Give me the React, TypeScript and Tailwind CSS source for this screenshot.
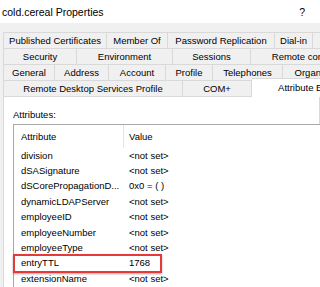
import React from 'react';

type Tab = { label: string; w: number };

const rows: Tab[][] = [
  [
    { label: 'Published Certificates', w: 104 },
    { label: 'Member Of', w: 61 },
    { label: 'Password Replication', w: 107 },
    { label: 'Dial-in', w: 38 },
    { label: 'Object', w: 60 },
  ],
  [
    { label: 'Security', w: 74 },
    { label: 'Environment', w: 96 },
    { label: 'Sessions', w: 78 },
    { label: 'Remote control', w: 107 },
  ],
  [
    { label: 'General', w: 52 },
    { label: 'Address', w: 54 },
    { label: 'Account', w: 57 },
    { label: 'Profile', w: 47 },
    { label: 'Telephones', w: 70 },
    { label: 'Organization', w: 78 },
  ],
];

const attributes: [string, string][] = [
  ['division', '<not set>'],
  ['dSASignature', '<not set>'],
  ['dSCorePropagationD...', '0x0 = ( )'],
  ['dynamicLDAPServer', '<not set>'],
  ['employeeID', '<not set>'],
  ['employeeNumber', '<not set>'],
  ['employeeType', '<not set>'],
  ['entryTTL', '1768'],
  ['extensionName', '<not set>'],
];

function TabCell({ tab, first }: { tab: Tab; first: boolean }) {
  return (
    <div
      style={{ width: tab.w }}
      className={`h-4 shrink-0 flex items-center justify-center whitespace-nowrap border-t border-r border-[#d9d9d9] ${
        first ? 'border-l' : ''
      }`}
    >
      {tab.label}
    </div>
  );
}

export default function App() {
  return (
    <div className="w-[320px] h-[287px] overflow-hidden bg-[#f0f0f0] text-black flex flex-col font-['Liberation_Sans',Arial,sans-serif] text-[9.5px] leading-[12px]">
      <div className="h-[23px] shrink-0 bg-white flex items-center justify-between pl-[2px] pr-[15px] text-[10.5px]">
        <span>cold.cereal Properties</span>
        <span>?</span>
      </div>

      <div className="mt-[9px] ml-[3px] flex flex-col">
        {rows.map((row, i) => (
          <div key={i} className="flex">
            {row.map((tab, j) => (
              <TabCell key={tab.label} tab={tab} first={j === 0} />
            ))}
          </div>
        ))}
        <div className="flex items-end h-4">
          <TabCell tab={{ label: 'Remote Desktop Services Profile', w: 180 }} first />
          <TabCell tab={{ label: 'COM+', w: 69 }} first={false} />
          <div className="relative z-10 -mb-px w-[116px] h-[19px] shrink-0 bg-white border-t border-r border-[#d9d9d9] flex items-start justify-center pt-[3px] whitespace-nowrap">
            Attribute Editor
          </div>
        </div>
      </div>

      <div className="ml-[3px] flex-1 bg-white border border-[#d9d9d9] pl-[9px] pt-[12px]">
        <div>Attributes:</div>
        <div className="relative mt-[3px] w-[320px] border border-[#a8a8a8] bg-white">
          <div className="flex h-[23px] items-center">
            <div className="w-[110px] h-full flex items-center pl-[7px] border-r border-[#e5e5e5]">Attribute</div>
            <div className="pl-[5px]">Value</div>
          </div>
          {attributes.map(([name, value]) => (
            <div key={name} className="flex h-[15.4px] items-center whitespace-nowrap">
              <div className="w-[110px] pl-[7px] border-r border-transparent overflow-hidden">{name}</div>
              <div className="pl-[5px]">{value}</div>
            </div>
          ))}
          <div className="absolute left-[-1px] top-[129px] w-[149px] h-[19px] border-2 border-[#e5393c] shadow-[0_1px_2px_rgba(0,0,0,0.35)]" />
        </div>
      </div>
    </div>
  );
}
